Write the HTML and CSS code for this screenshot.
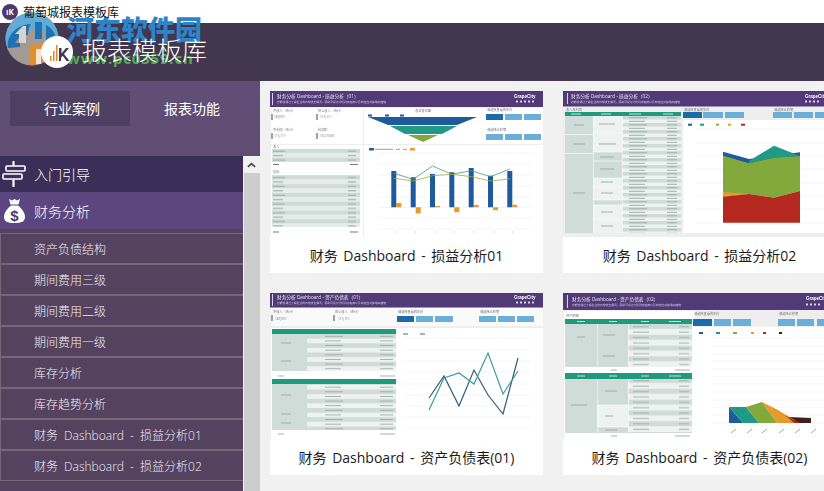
FILE: index.html
```html
<!DOCTYPE html>
<html lang="zh-CN">
<head>
    <meta charset="UTF-8">
    <title>葡萄城报表模板库</title>
    <link rel="stylesheet" href="styles.css">
</head>
<body>
    <div class="titlebar">
        <span class="app-icon">ıK</span>
        <span class="app-name">葡萄城报表模板库</span>
    </div>

    <header class="banner">
        <span class="logo">
            <svg viewBox="0 0 32 32" width="32" height="32">
                <circle cx="16" cy="16" r="16" fill="#fff"/>
                <path d="M9 25V20h1.500v5zM12 25V15h1.500v10zM15 25V9h1.500v16z" fill="#e08a2c"/>
                <path d="M18 12h2.500v5.500l4.500-5.500h3l-5 6 5.500 7h-3l-3.800-5.200-1.700 2V25H18z" fill="#43364f"/>
            </svg>
        </span>
        <h1>报表模板库</h1>
    </header>

    <div class="watermark">
        <svg class="wm-logo" viewBox="0 0 54 54" width="54" height="54">
            <circle cx="27" cy="27" r="26.500" fill="#a39995"/>
            <path d="M.5 27A26.500 26.500 0 0 1 53.500 27L52 31C44 20 36 17 27 17S8 22 2 34z" fill="#62abd4"/>
            <path d="M3 36C1 24 11 13 26 12c-2 3-3 7-3 11h-7l-6 8h5v4z" fill="#1f72b3"/>
            <path d="M30 10h7v17h-7zM41 13c6 3 10 9 10 16l-10 1z" fill="#1f72b3"/>
            <path d="M18 14l-8 8h4v9h7V14z" fill="#d9d4d0"/>
            <path d="M24 33c8 0 16-2 27-5-1 13-12 25-24 25-2 0-3 0-3-1z" fill="#e48d2e"/>
            <path d="M31 37h5v15h-5zM42 35h4v11h-4z" fill="#f4e6d3"/>
        </svg>
        <div class="wm-text">
            <div class="wm-name">河东软件园</div>
            <div class="wm-url">www.pc0359.cn</div>
        </div>
    </div>

    <div class="layout">
        <aside class="sidebar">
            <div class="tabs">
                <div class="tab active">行业案例</div>
                <div class="tab">报表功能</div>
            </div>
            <div class="nav-wrap">
                <nav class="nav">
                    <div class="nav-group guide">
                        <svg class="nav-icon" viewBox="0 0 24 26" width="24" height="26">
                            <path d="M11.500 1v3M11.500 19v6" fill="none" stroke="#fff" stroke-width="2.200" stroke-linecap="round"/>
                            <rect x="4" y="5" width="19" height="5" rx="1" fill="none" stroke="#fff" stroke-width="1.600"/>
                            <rect x="1" y="13" width="19" height="5" rx="1" fill="none" stroke="#fff" stroke-width="1.600"/>
                        </svg>
                        <span>入门引导</span>
                    </div>
                    <div class="nav-group finance">
                        <svg class="nav-icon" viewBox="0 0 24 26" width="24" height="26">
                            <path d="M7 1l3 1.500L12.500 1l2.500 1.500L18 1l-1.500 5.500h-8z" fill="#fff"/>
                            <path d="M9 7.500h7c4 3 7 7.500 7 11.500 0 4.500-3.500 6-10.500 6S2 23.500 2 19c0-4 3-8.500 7-11.500z" fill="#fff"/>
                            <text x="12.500" y="22.500" class="bag-sign">$</text>
                        </svg>
                        <span>财务分析</span>
                    </div>
                    <ul class="nav-items">
                        <li>资产负债结构</li>
                        <li>期间费用三级</li>
                        <li>期间费用二级</li>
                        <li>期间费用一级</li>
                        <li>库存分析</li>
                        <li>库存趋势分析</li>
                        <li>财务 Dashboard - 损益分析01</li>
                        <li>财务 Dashboard - 损益分析02</li>
                    </ul>
                </nav>
                <div class="scrollbar">
                    <div class="scroll-up">
                        <svg viewBox="0 0 10 6" width="9" height="6"><path d="M1 5l4-3.500L9 5" fill="none" stroke="#444" stroke-width="1.800"/></svg>
                    </div>
                    <div class="scroll-thumb"></div>
                </div>
            </div>
        </aside>

        <main class="gallery">
            <!-- 损益分析01 -->
            <article class="card">
                <svg class="thumb" viewBox="0 0 273 146" width="273" height="146">
                    <defs>
                        <pattern id="rows1" width="88" height="8.800" patternUnits="userSpaceOnUse" y="58">
                            <rect width="88" height="4.400" fill="#cfdcd8"/>
                            <rect y="4.400" width="88" height="4.400" fill="#e4ecea"/>
                            <path d="M3 2.200h12M78 2.200h8M3 6.600h10M78 6.600h8" stroke="#9aa8a4" stroke-width="1"/>
                        </pattern>
                    </defs>
                    <rect width="273" height="146" fill="#eeeeee"/>
                    <rect y="0" width="273" height="16" fill="#523a78"/>
                    <rect x="2" y="2" width="1" height="12" fill="#d8d0e4"/>
                    <text x="7" y="7" class="th-title">财务分析 Dashboard - 损益分析（01）</text>
                    <text x="7" y="11.500" class="th-sub">您能够通过了解企业的日常收支情况，帮助可视化分析财务趋势以及制定应对策略和措施</text>
                    <text x="244" y="6.500" class="th-brand">GrapeCity</text>
                    <path d="M246 10.500h2M250 10.500h2M254 10.500h2M258 10.500h2M262 10.500h2" stroke="#d8d0e4" stroke-width="2"/>

                    <rect x="1" y="17" width="92" height="36" fill="#fff"/>
                    <text x="3" y="21" class="th-label">净收入（合计）</text>
                    <text x="48" y="21" class="th-label">同上收入（合计）</text>
                    <text x="4" y="27" class="th-label">189,951</text>
                    <text x="50" y="27" class="th-label">115,111</text>
                    <text x="3" y="40" class="th-label">净利润（合计）</text>
                    <text x="48" y="40" class="th-label">利润率</text>
                    <text x="4" y="46" class="th-label">115,111</text>
                    <text x="50" y="46" class="th-label">10.0100%</text>
                    <path d="M2 23v6M47 23v6M2 42v6M47 42v6" stroke="#3f6c8e" stroke-width="1.200"/>

                    <rect x="94" y="17" width="179" height="36" fill="#fff"/>
                    <text x="153" y="21" class="th-label mid">收益变化图</text>
                    <path d="M98 24.500h4M115 24.500h4M130 24.500h4" stroke="#1f5a9c" stroke-width="2"/>
                    <path d="M98 26h109l-20 8H118z" fill="#1f5a9c"/>
                    <path d="M120 35h67l-15 8h-37z" fill="#1f9a85"/>
                    <path d="M138 44h30l-15 7z" fill="#83a83c"/>
                    <text x="217" y="20" class="th-label">请选择查看的年份</text>
                    <rect x="216" y="23" width="17" height="6" fill="#1a6ca8"/>
                    <rect x="235" y="23" width="17" height="6" fill="#6cafd6"/>
                    <rect x="254" y="23" width="17" height="6" fill="#6cafd6"/>
                    <text x="217" y="40" class="th-label">请选择比较期</text>
                    <rect x="216" y="43" width="17" height="6" fill="#6cafd6"/>
                    <rect x="235" y="43" width="17" height="6" fill="#6cafd6"/>
                    <rect x="254" y="43" width="17" height="6" fill="#6cafd6"/>

                    <rect x="1" y="54" width="92" height="92" fill="#fff"/>
                    <text x="3" y="57" class="th-label">收入</text>
                    <rect x="2" y="58" width="88" height="13" fill="url(#rows1)"/>
                    <path d="M3 73.500h6M80 73.500h8" stroke="#777" stroke-width="1"/>
                    <text x="3" y="82" class="th-label">支出</text>
                    <rect x="2" y="84" width="88" height="52" fill="url(#rows1)"/>
                    <path d="M3 141h6M80 141h8" stroke="#777" stroke-width="1"/>

                    <rect x="94" y="54" width="179" height="92" fill="#fff"/>
                    <rect x="99" y="57" width="5" height="2.500" fill="#1f5a9c"/>
                    <path d="M105 58.300h18M126 58.300h4M133 58.300h4" stroke="#999" stroke-width="1"/>
                    <rect x="140" y="57" width="5" height="2.500" fill="#e59a2c"/>
                    <path d="M108 62h154M108 73h154M108 84h154M108 95h154M108 106h154M108 116.500h154M108 127h154M108 138h154" stroke="#eeeeee" stroke-width=".6"/>
                    <path d="M121.300 80h5v36.300h-5zM140.700 86.300h5v30h-5zM160 83h5v33.300h-5zM179.300 81.300h5v35h-5zM198.700 77h5v39.300h-5zM218 84.700h5v31.600h-5zM237.300 80h5v36.300h-5z" fill="#1f5a9c"/>
                    <path d="M126.300 112h5v4.300h-5zM145.700 116.300h5v6.300h-5zM165 115h5v1.300h-5zM184.300 116.300h5v5h-5zM203.700 114h5v2.300h-5zM223 116.300h5v3h-5zM242.300 113.700h5v2.600h-5z" fill="#e59a2c"/>
                    <polyline points="123.800,82.300 143.200,88.300 162.500,75 181.800,83.300 201.200,79.700 220.500,85.700 239.800,78" fill="none" stroke="#3d9c90" stroke-width=".8"/>
                    <polyline points="123.800,87.300 143.200,90 162.500,84.700 181.800,83.300 201.200,85.700 220.500,90 239.800,88" fill="none" stroke="#a8a83c" stroke-width=".8"/>
                    <path d="M126 141h1M145 141h1M165 141h1M184 141h1M203 141h1M223 141h1M242 141h1" stroke="#bbb" stroke-width="1"/>
                </svg>
                <div class="caption">财务 Dashboard - 损益分析01</div>
            </article>

            <!-- 损益分析02 -->
            <article class="card">
                <svg class="thumb" viewBox="0 0 273 146" width="273" height="146">
                    <defs>
                        <pattern id="rows2" width="116" height="7" patternUnits="userSpaceOnUse" y="25">
                            <rect width="116" height="7" fill="#eef2f0"/>
                            <rect width="116" height="3.500" fill="#cfdcd8"/>
                            <path d="M66 1.800h18M104 1.800h10M66 5.300h16M104 5.300h10" stroke="#9aa8a4" stroke-width=".9"/>
                        </pattern>
                    </defs>
                    <rect width="273" height="146" fill="#eeeeee"/>
                    <rect width="273" height="15.500" fill="#523a78"/>
                    <rect x="4" y="2" width="1" height="11" fill="#d8d0e4"/>
                    <text x="8" y="7" class="th-title">财务分析 Dashboard - 损益分析（02）</text>
                    <text x="8" y="11.500" class="th-sub">您能够通过了解企业的日常收支情况，帮助可视化分析财务趋势以及制定应对策略和措施</text>
                    <text x="242" y="6.500" class="th-brand">GrapeCity</text>
                    <path d="M242 10.500h2M246 10.500h2M250 10.500h2M254 10.500h2" stroke="#d8d0e4" stroke-width="2"/>

                    <text x="3" y="20" class="th-label">收入及利润</text>
                    <rect x="2" y="21" width="116" height="4" fill="#1f9a7c"/>
                    <path d="M8 23h10M38 23h10M66 23h12M100 23h10" stroke="#d7efe8" stroke-width=".9"/>
                    <rect x="2" y="25" width="116" height="117" fill="url(#rows2)"/>
                    <rect x="2" y="25" width="28" height="117" fill="#cfdcd8"/>
                    <rect x="30" y="25" width="29" height="17" fill="#eef2f0"/>
                    <rect x="30" y="42" width="29" height="19" fill="#eef2f0"/>
                    <rect x="30" y="61" width="29" height="9" fill="#cfdcd8"/>
                    <rect x="30" y="70" width="29" height="17" fill="#cfdcd8"/>
                    <rect x="30" y="87" width="29" height="9" fill="#eef2f0"/>
                    <rect x="30" y="96" width="29" height="13" fill="#eef2f0"/>
                    <rect x="30" y="109" width="29" height="5" fill="#cfdcd8"/>
                    <rect x="30" y="114" width="29" height="14" fill="#eef2f0"/>
                    <rect x="30" y="128" width="29" height="14" fill="#eef2f0"/>
                    <path d="M2 43.500h28M2 62.500h28M30 42h29M30 61h29M30 70h29M30 87h29M30 96h29M30 109h29M30 114h29M30 128h29M59.500 25v117M30.500 25v117" stroke="#fff" stroke-width=".6"/>
                    <path d="M11 34h10M10 53h12M10 102h12M36 33h16M36 53h17M37 66h14M37 78h14M38 91h12M38 102h12M38 121h12M38 135h12" stroke="#9aa8a4" stroke-width=".9"/>

                    <text x="121" y="20" class="th-label">请选择查看的年份</text>
                    <rect x="120" y="21" width="19" height="6" fill="#1a6ca8"/>
                    <rect x="140" y="21" width="20" height="6" fill="#6cafd6"/>
                    <rect x="162" y="21" width="19" height="6" fill="#6cafd6"/>
                    <text x="211" y="20" class="th-label">请选择比较期</text>
                    <rect x="210" y="21" width="19" height="6" fill="#6cafd6"/>
                    <rect x="231" y="21" width="19" height="6" fill="#6cafd6"/>
                    <rect x="252" y="21" width="19" height="6" fill="#6cafd6"/>

                    <rect x="120" y="29" width="153" height="113" fill="#fff"/>
                    <path d="M125 33.700h4" stroke="#1f5a9c" stroke-width="2"/>
                    <path d="M137 33.700h4" stroke="#1f9a85" stroke-width="2"/>
                    <path d="M153 33.700h3" stroke="#83a83c" stroke-width="2"/>
                    <path d="M165 33.700h3" stroke="#e59a2c" stroke-width="2"/>
                    <path d="M178 33.700h4" stroke="#b5281f" stroke-width="2"/>
                    <path d="M132 38h141M132 52h141M132 65h141M132 78h141M132 92h141M132 105h141M132 118h141M132 132h141" stroke="#eeeeee" stroke-width=".6"/>
                    <polygon points="160,60.700 186,68 237,61.300 237,66 186,73 160,65" fill="#1f5a9c"/>
                    <polygon points="186,70 211,54.700 232,63 237,65 211,66.700 186,72.300" fill="#1f9a85"/>
                    <polygon points="160,64.700 186,72.300 211,66.700 237,65 237,100 211,106.700 186,103 160,105.700" fill="#83a83c"/>
                    <polygon points="160,101 186,103 160,105.700" fill="#e59a2c"/>
                    <polygon points="198,104.800 211,106.700 225,103 211,108" fill="#e59a2c"/>
                    <polygon points="160,105.700 186,103 211,106.700 237,100 237,131.700 160,131.700" fill="#b5281f"/>
                </svg>
                <div class="caption">财务 Dashboard - 损益分析02</div>
            </article>

            <!-- 资产负债表01 -->
            <article class="card">
                <svg class="thumb" viewBox="0 0 273 146" width="273" height="146">
                    <defs>
                        <pattern id="rows3" width="124" height="9.250" patternUnits="userSpaceOnUse" y="41">
                            <rect width="124" height="4.600" fill="#cfdcd8"/>
                            <rect y="4.600" width="124" height="4.650" fill="#eef2f0"/>
                            <path d="M55 2.300h18M110 2.300h13M55 6.900h16M110 6.900h13" stroke="#9aa8a4" stroke-width=".9"/>
                        </pattern>
                    </defs>
                    <rect width="273" height="146" fill="#eeeeee"/>
                    <rect width="273" height="14.500" fill="#523a78"/>
                    <rect x="2" y="1" width="1" height="12" fill="#d8d0e4"/>
                    <text x="7" y="6" class="th-title">财务分析 Dashboard - 资产负债表（01）</text>
                    <text x="7" y="10.500" class="th-sub">您能够通过了解企业的日常收支情况，帮助可视化分析财务趋势以及制定应对策略和措施</text>
                    <text x="244" y="5.500" class="th-brand">GrapeCity</text>
                    <path d="M246 9.500h2M250 9.500h2M254 9.500h2M258 9.500h2M262 9.500h2" stroke="#d8d0e4" stroke-width="2"/>

                    <rect x="1" y="15" width="272" height="18" fill="#fafafa"/>
                    <text x="3" y="20" class="th-label">净收入（合计）</text>
                    <text x="65" y="20" class="th-label">同上收入（合计）</text>
                    <text x="5" y="26.500" class="th-label">189,951</text>
                    <text x="68" y="26.500" class="th-label">115,111</text>
                    <path d="M2 22v6M64 22v6" stroke="#3f6c8e" stroke-width="1.200"/>
                    <text x="128" y="20" class="th-label">请选择查看的年份</text>
                    <rect x="127" y="23" width="17" height="6" fill="#1a6ca8"/>
                    <rect x="146" y="23" width="17" height="6" fill="#6cafd6"/>
                    <rect x="165" y="23" width="18" height="6" fill="#6cafd6"/>
                    <text x="210" y="20" class="th-label">请选择比较期</text>
                    <rect x="209" y="23" width="17" height="6" fill="#6cafd6"/>
                    <rect x="228" y="23" width="17" height="6" fill="#6cafd6"/>
                    <rect x="247" y="23" width="17" height="6" fill="#6cafd6"/>

                    <rect x="1" y="35" width="126" height="111" fill="#fff"/>
                    <rect x="2" y="36" width="124" height="5" fill="#1f9a7c"/>
                    <rect x="2" y="41" width="124" height="37" fill="url(#rows3)"/>
                    <rect x="2" y="41" width="35" height="37" fill="#cfdcd8"/>
                    <path d="M11 50h10M11 68h10M8 83h6M110 83h15" stroke="#9aa8a4" stroke-width=".9"/>
                    <rect x="2" y="86" width="124" height="5" fill="#1f9a7c"/>
                    <rect x="2" y="91" width="124" height="46" fill="url(#rows3)"/>
                    <rect x="2" y="91" width="35" height="46" fill="#cfdcd8"/>
                    <path d="M11 102h10M11 121h10M11 130h10M8 141h6M110 141h15" stroke="#9aa8a4" stroke-width=".9"/>

                    <rect x="127" y="35" width="146" height="111" fill="#fff"/>
                    <path d="M133 41h5M150 41h5" stroke="#3f6c8e" stroke-width="1"/>
                    <path d="M135 45h125M135 57h125M135 68h125M135 79h125M135 91h125M135 102h125M135 113h125M135 124h125M135 135h125" stroke="#eeeeee" stroke-width=".6"/>
                    <polyline points="159,105 174,83 189,113 204,77 218,102 233,121 248,65" fill="none" stroke="#2f5d7f" stroke-width="1.200"/>
                    <polyline points="159,117 174,85 189,80 204,91 218,60 233,101 248,78" fill="none" stroke="#3d9c90" stroke-width="1.200"/>
                </svg>
                <div class="caption">财务 Dashboard - 资产负债表(01)</div>
            </article>

            <!-- 资产负债表02 -->
            <article class="card">
                <svg class="thumb" viewBox="0 0 273 146" width="273" height="146">
                    <defs>
                        <pattern id="rows4" width="127" height="10.800" patternUnits="userSpaceOnUse" y="31">
                            <rect width="127" height="5.400" fill="#cfdcd8"/>
                            <rect y="5.400" width="127" height="5.400" fill="#eef2f0"/>
                            <path d="M70 2.700h16M116 2.700h10M70 8.100h16M116 8.100h10" stroke="#9aa8a4" stroke-width=".9"/>
                        </pattern>
                    </defs>
                    <rect width="273" height="146" fill="#eeeeee"/>
                    <rect width="273" height="17" fill="#523a78"/>
                    <rect x="4" y="2" width="1" height="13" fill="#d8d0e4"/>
                    <text x="9" y="7.500" class="th-title">财务分析 Dashboard - 资产负债表（02）</text>
                    <text x="9" y="12.500" class="th-sub">您能够通过了解企业的日常收支情况，帮助可视化分析财务趋势以及制定应对策略和措施</text>
                    <text x="243" y="6.500" class="th-brand">GrapeCity</text>
                    <path d="M243 11.500h2M247 11.500h2M251 11.500h2M255 11.500h2" stroke="#d8d0e4" stroke-width="2"/>

                    <rect x="1" y="18" width="131" height="128" fill="#fff"/>
                    <text x="3" y="24" class="th-label">资产明细</text>
                    <rect x="2" y="26" width="127" height="5" fill="#1f9a7c"/>
                    <rect x="2" y="31" width="127" height="43" fill="url(#rows4)"/>
                    <rect x="2" y="31" width="32" height="43" fill="#cfdcd8"/>
                    <rect x="34" y="31" width="31" height="43" fill="#cfdcd8"/>
                    <path d="M65.500 31v43M34.500 31v43" stroke="#fff" stroke-width=".6"/>
                    <path d="M14 44h8M40 42h12M40 63h12M48 77h6M112 77h15" stroke="#9aa8a4" stroke-width=".9"/>
                    <rect x="2" y="80" width="127" height="6" fill="#1f9a7c"/>
                    <rect x="2" y="86" width="127" height="54" fill="url(#rows4)"/>
                    <rect x="2" y="86" width="32" height="54" fill="#cfdcd8"/>
                    <rect x="34" y="86" width="31" height="26" fill="#cfdcd8"/>
                    <rect x="34" y="112" width="31" height="22" fill="#eef2f0"/>
                    <rect x="34" y="134" width="31" height="6" fill="#cfdcd8"/>
                    <path d="M65.500 86v54M34.500 86v54M34 112h31M34 134h31" stroke="#fff" stroke-width=".6"/>
                    <path d="M8 112h16M42 98h12M42 123h8M42 137h12M48 143h6M112 143h15" stroke="#9aa8a4" stroke-width=".9"/>
                    <path d="M14 28.500h8M46 28.500h8M78 28.500h8M106 28.500h12M14 83h8M46 83h8M78 83h8M106 83h12" stroke="#d7efe8" stroke-width=".9"/>

                    <text x="131" y="22" class="th-label">请选择查看的年份</text>
                    <rect x="130" y="26" width="19" height="7" fill="#1a6ca8"/>
                    <rect x="151" y="26" width="17" height="7" fill="#6cafd6"/>
                    <rect x="170" y="26" width="18" height="7" fill="#6cafd6"/>
                    <text x="216" y="22" class="th-label">请选择比较期</text>
                    <rect x="215" y="26" width="17" height="7" fill="#6cafd6"/>
                    <rect x="234" y="26" width="17" height="7" fill="#6cafd6"/>
                    <rect x="254" y="26" width="17" height="7" fill="#6cafd6"/>

                    <rect x="132" y="34" width="141" height="112" fill="#fff"/>
                    <path d="M136 40h4" stroke="#1f5a9c" stroke-width="2"/>
                    <path d="M153 40h4" stroke="#1f9a85" stroke-width="2"/>
                    <path d="M170 40h4" stroke="#83a83c" stroke-width="2"/>
                    <path d="M188 40h3" stroke="#e59a2c" stroke-width="2"/>
                    <path d="M200 40h3" stroke="#b5281f" stroke-width="2"/>
                    <path d="M216 40h3" stroke="#40201f" stroke-width="2"/>
                    <path d="M149 45h124M149 53h124M149 61h124M149 68h124M149 76h124M149 84h124M149 91h124M149 99h124M149 107h124M149 114h124M149 122h124M149 130h124" stroke="#eeeeee" stroke-width=".6"/>
                    <path d="M166 114v16h14z" fill="#1f5a9c"/>
                    <path d="M166 114h17l13 16h-16z" fill="#1f9a85"/>
                    <path d="M183 114l16-5 15 21h-18z" fill="#83a83c"/>
                    <path d="M199 109l16 8 16 10v3h-17z" fill="#e59a2c"/>
                    <path d="M222 122l9 5 17 1v2h-17z" fill="#b5281f"/>
                    <path d="M226 124l22 1v5h-11z" fill="#40201f"/>
                    <path d="M168 140l5-4M184 140l5-4M199 140l5-4M216 140l5-4M232 140l5-4M248 140l5-4" stroke="#999" stroke-width=".9"/>
                </svg>
                <div class="caption">财务 Dashboard - 资产负债表(02)</div>
            </article>
        </main>
    </div>
</body>
</html>
```

FILE: styles.css
```css
/* Base */
* {
    box-sizing: border-box;
}

html,
body {
    height: 100%;
}

body {
    margin: 0;
    width: 824px;
    height: 491px;
    overflow: hidden;
    position: relative;
    display: flex;
    flex-direction: column;
    background-color: #f1f1f1;
    color: #fff;
    font-family: "Open Sans", "Noto Sans CJK SC", sans-serif;
}

/* Window title */
.titlebar {
    flex: 0 0 23px;
    display: flex;
    align-items: center;
    padding-left: 2px;
    background-color: #fff;
    color: #111;
    font-size: 12px;
}

.app-name {
    position: relative;
    z-index: 2;
    margin-left: 5px;
}

.app-icon {
    width: 16px;
    height: 16px;
    border-radius: 50%;
    background-color: #4b3a6b;
    color: #fff;
    font-size: 8px;
    font-weight: 700;
    line-height: 16px;
    text-align: center;
}

/* Purple banner */
.banner {
    flex: 0 0 58px;
    display: flex;
    align-items: center;
    padding-left: 41px;
    background-color: #43364f;
}

.logo {
    position: relative;
    z-index: 2;
    display: flex;
}

.banner h1 {
    position: relative;
    z-index: 2;
    margin: -3px 0 0 9px;
    font-size: 25px;
    font-weight: 300;
    line-height: 1;
}

/* Site watermark stamped over the shot */
.watermark {
    position: absolute;
    top: 12px;
    left: 5px;
    display: flex;
    align-items: flex-start;
    z-index: 1;
}

.wm-logo {
    flex: none;
}

.wm-text {
    margin-left: 8px;
}

.wm-name {
    color: #2f84c8;
    font-size: 27px;
    font-weight: 900;
    line-height: 36px;
}

.wm-url {
    color: #57a957;
    font-size: 15px;
    font-weight: 700;
    line-height: 14px;
    margin-top: 3px;
    letter-spacing: .8px;
}

/* Main split */
.layout {
    flex: 1;
    display: flex;
    min-height: 0;
}

.sidebar {
    flex: 0 0 260px;
    display: flex;
    flex-direction: column;
    background: linear-gradient(#604e76, #58465f);
}

.tabs {
    flex: 0 0 75px;
    display: flex;
    padding: 10px 0 0 10px;
    font-size: 14px;
    text-align: center;
}

.tab {
    width: 120px;
    height: 35px;
    padding-left: 4px;
    line-height: 35px;
}

.tab.active {
    background-color: #4f3f62;
}

.nav-wrap {
    flex: 1;
    display: flex;
    min-height: 0;
}

.nav {
    flex: 0 0 243px;
    overflow: hidden;
    background-color: #55425f;
}

.nav-group {
    display: flex;
    align-items: center;
    height: 36px;
    padding-left: 2px;
    font-size: 14px;
    font-weight: 300;
}

.nav-group span {
    margin-left: 8px;
}

.nav-icon {
    flex: none;
}

.bag-sign {
    fill: #4a3a6e;
    font-family: "Liberation Sans", sans-serif;
    font-size: 15px;
    font-weight: 700;
    text-anchor: middle;
}

.guide {
    background-color: #3b2e58;
}

.finance {
    height: 37px;
    background-color: #5b4680;
}

.nav-items {
    margin: 4px 0 0;
    padding: 0;
    list-style: none;
    font-size: 12px;
    font-weight: 300;
    word-spacing: 3px;
}

.nav-items li {
    height: 31px;
    padding-left: 33px;
    line-height: 31px;
    border: 1px solid #766679;
    border-width: 1px 0 1px 1px;
    color: #f1edf3;
}

.scrollbar {
    flex: 0 0 17px;
    display: flex;
    flex-direction: column;
    background-color: #f1f1f1;
}

.scroll-up {
    flex: 0 0 17px;
    display: flex;
    align-items: center;
    justify-content: center;
}

.scroll-thumb {
    flex: 1;
    margin-left: 1px;
    background-color: #cdcdcd;
}

/* Report cards */
.gallery {
    flex: 1;
    display: grid;
    grid-template-columns: 273px 273px;
    grid-auto-rows: 182px;
    gap: 20px;
    padding: 10px 0 0 10px;
    overflow: hidden;
}

.card {
    display: flex;
    flex-direction: column;
    background-color: #fff;
}

.thumb {
    display: block;
    flex: none;
    filter: blur(.4px);
}

.caption {
    flex: 1;
    color: #1a1a1a;
    font-size: 14px;
    line-height: 38px;
    word-spacing: 2px;
    text-align: center;
}

/* Tiny labels inside the report thumbnails */
.th-title {
    fill: #e9e4f2;
    font-size: 4.700px;
}

.th-sub {
    fill: #cfc7de;
    font-size: 2.800px;
}

.th-brand {
    fill: #fff;
    font-family: "Liberation Sans", sans-serif;
    font-size: 4.500px;
    font-weight: 700;
}

.th-label {
    fill: #777;
    font-size: 3.200px;
}

.mid {
    text-anchor: middle;
}
```
